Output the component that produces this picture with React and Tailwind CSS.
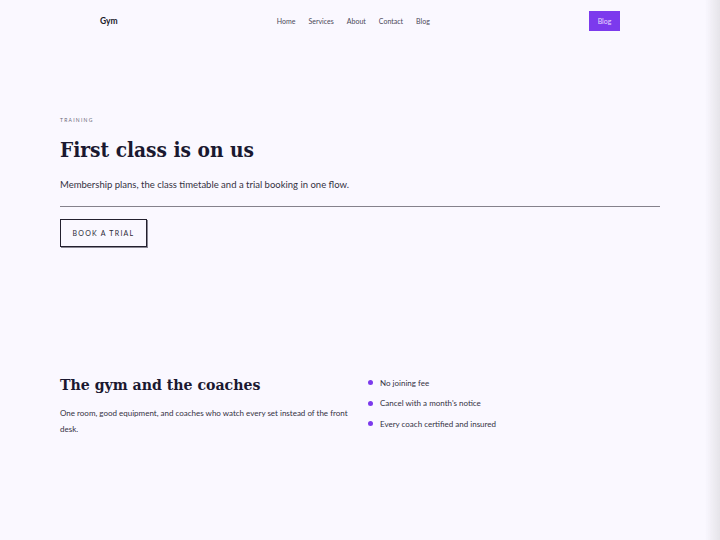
import React from 'react';

const navLinks = ['Home', 'Services', 'About', 'Contact', 'Blog'];

const perks = [
  'No joining fee',
  "Cancel with a month's notice",
  'Every coach certified and insured',
];

const serif = "font-['DejaVu_Serif_Condensed','DejaVu_Serif',serif]";

const App = () => {
  return (
    <div className="min-h-screen bg-[#faf8ff] font-['Lato',sans-serif] text-[#1c1a29]">
      {/* Header */}
      <header className="mx-auto flex w-[520px] items-center justify-between pt-[11px]">
        <span className="text-[8.5px] font-bold">Gym</span>
        <nav className="flex gap-[13px] text-[7px] text-[#4b4858]">
          {navLinks.map(link => (
            <a key={link} href="#">{link}</a>
          ))}
        </nav>
        <a href="#" className="flex h-[20px] w-[31px] items-center justify-center bg-[#7c3aed] text-[7px] text-[#eadcff]">
          Blog
        </a>
      </header>

      {/* Hero */}
      <section className="mx-auto w-[600px] pt-[86px]">
        <p className="text-[5px] tracking-[0.25em] text-[#6b6878]">TRAINING</p>
        <h1 className={`${serif} mt-[12px] text-[20.7px] font-bold leading-[26px] text-[#1a1830]`}>
          First class is on us
        </h1>
        <p className="mt-[15px] text-[9.5px] text-[#34313f]">
          Membership plans, the class timetable and a trial booking in one flow.
        </p>
        <div className="mt-[14px] h-px bg-[#85828c]" />
        <button className="mt-[12px] h-[28px] w-[87px] border border-[#23202e] text-[7px] tracking-[0.18em] text-[#2b2836] shadow-[1px_1px_0_#8a8793]">
          BOOK A TRIAL
        </button>
      </section>

      {/* About */}
      <section className="mx-auto mt-[128px] grid w-[600px] grid-cols-2 gap-4">
        <div>
          <h2 className={`${serif} text-[15.7px] font-bold leading-[20px] text-[#1a1830]`}>
            The gym and the coaches
          </h2>
          <p className="mt-[10px] text-[8px] leading-[16px] text-[#34313f]">
            One room, good equipment, and coaches who watch every set instead of the front desk.
          </p>
        </div>
        <ul className="flex flex-col gap-[10.5px] pt-[3px] text-[8px] text-[#34313f]">
          {perks.map(perk => (
            <li key={perk} className="flex items-center gap-[7px] leading-[10px]">
              <span className="h-[5px] w-[5px] rounded-full bg-[#7c3aed]" />
              {perk}
            </li>
          ))}
        </ul>
      </section>

      {/* Right edge shade */}
      <div className="pointer-events-none fixed right-0 top-0 h-full w-[15px] bg-gradient-to-r from-transparent to-[#e6e4ea]" />
    </div>
  );
};

export default App;
